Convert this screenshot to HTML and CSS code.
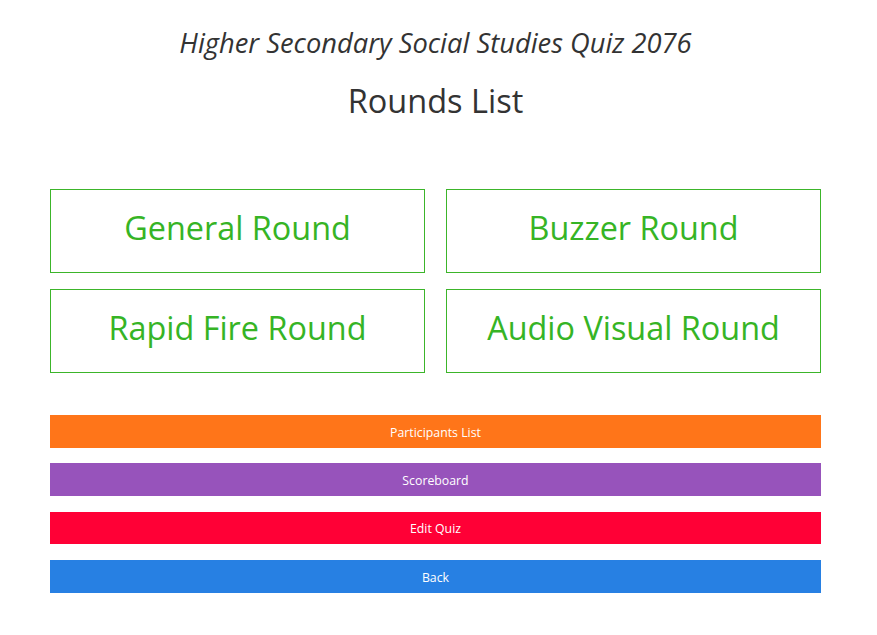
FILE: index.html
```html
<!DOCTYPE html>
<html>
<head>
<meta charset="utf-8">
<link rel="stylesheet" href="styles.css">
</head>
<body>
<div class="page">
  <h2 class="quiz-title">Higher Secondary Social Studies Quiz 2076</h2>
  <h1 class="page-title">Rounds List</h1>
  <div class="rounds">
    <a class="round">General Round</a>
    <a class="round">Buzzer Round</a>
    <a class="round">Rapid Fire Round</a>
    <a class="round">Audio Visual Round</a>
  </div>
  <div class="actions">
    <a class="btn btn-orange">Participants List</a>
    <a class="btn btn-purple">Scoreboard</a>
    <a class="btn btn-red">Edit Quiz</a>
    <a class="btn btn-blue">Back</a>
  </div>
</div>
</body>
</html>
```
FILE: styles.css
```css
* { box-sizing: border-box; }
html, body { margin: 0; padding: 0; background: #fff; }
body {
  font-family: "Open Sans", "Noto Sans", sans-serif;
  color: #333;
}
.page {
  width: 771px;
  margin-left: 50px;
  padding-top: 24px;
}
.quiz-title {
  margin: 0;
  text-align: center;
  font-style: italic;
  font-weight: 400;
  font-size: 27.3px;
  line-height: 38px;
}
.page-title {
  margin: 19px 0 0;
  text-align: center;
  font-weight: 400;
  font-size: 32.5px;
  line-height: 40px;
}
.rounds {
  margin-top: 68px;
  display: grid;
  grid-template-columns: 375px 375px;
  column-gap: 21px;
  row-gap: 16px;
}
.round {
  height: 84px;
  border: 1px solid #3cb52a;
  color: #36b425;
  display: flex;
  align-items: center;
  justify-content: center;
  font-size: 32.4px;
  padding-bottom: 9px;
}
.actions {
  margin-top: 42px;
  display: flex;
  flex-direction: column;
  gap: 15.6px;
}
.btn {
  height: 32.7px;
  display: flex;
  align-items: center;
  justify-content: center;
  color: #fff;
  font-size: 12.3px;
  padding-top: 2px;
}
.btn-orange { background: #ff7519; }
.btn-purple { background: #9753bb; }
.btn-red { background: #ff0036; }
.btn-blue { background: #2780e3; }
```
